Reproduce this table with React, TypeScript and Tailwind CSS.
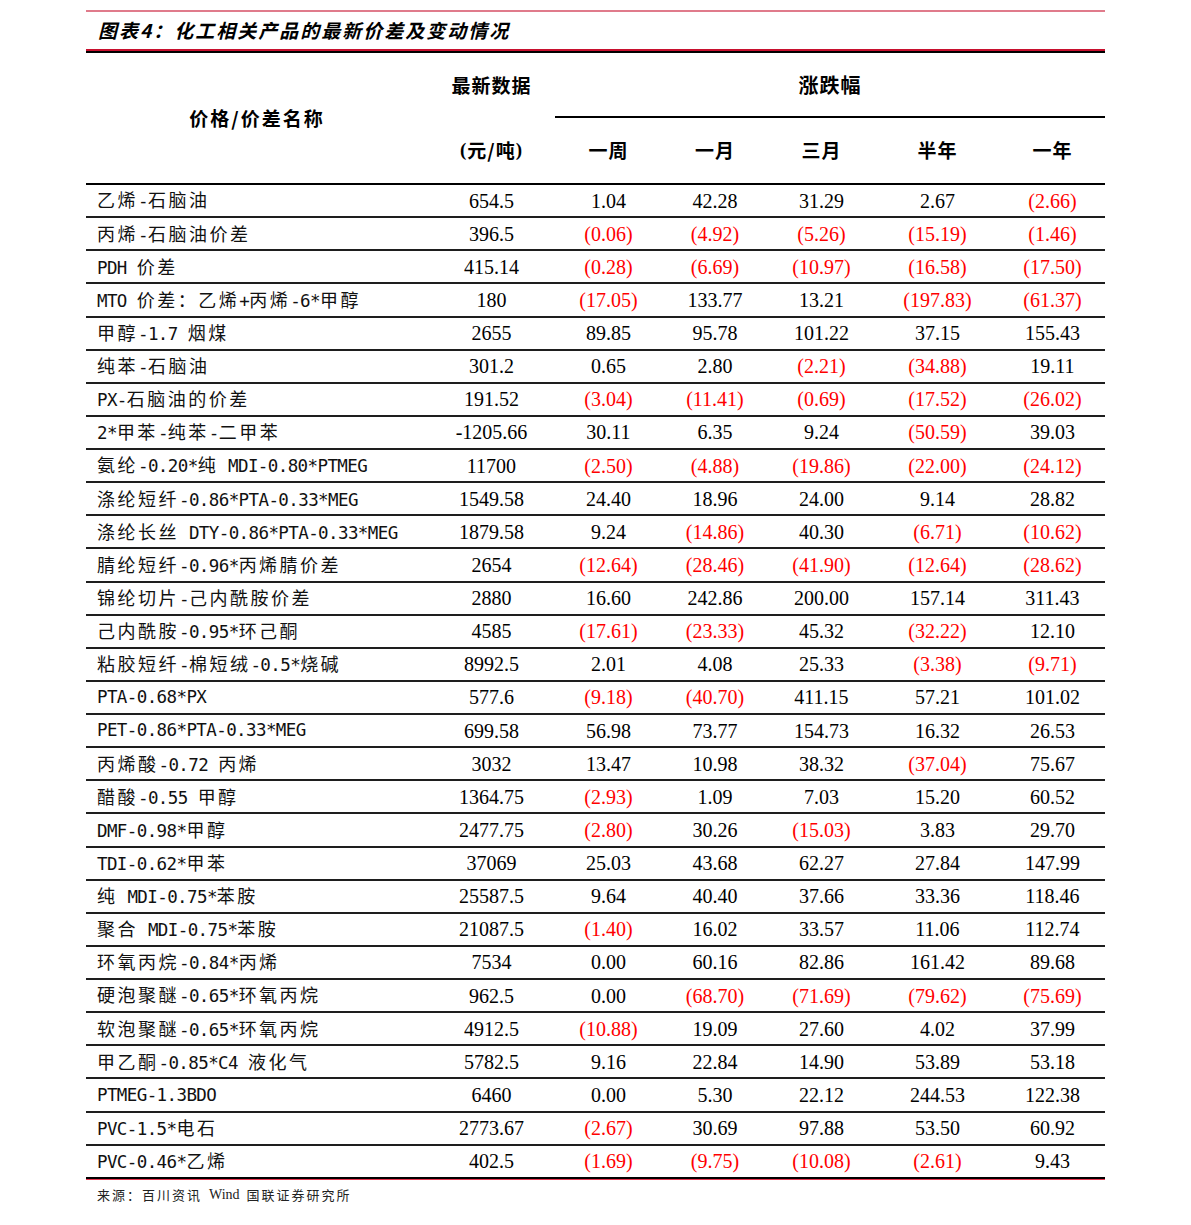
import React from "react";

type Row = [string, string, string, string, string, string, string];

const rows: Row[] = [
  ["乙烯-石脑油", "654.5", "1.04", "42.28", "31.29", "2.67", "(2.66)"],
  ["丙烯-石脑油价差", "396.5", "(0.06)", "(4.92)", "(5.26)", "(15.19)", "(1.46)"],
  ["PDH 价差", "415.14", "(0.28)", "(6.69)", "(10.97)", "(16.58)", "(17.50)"],
  ["MTO 价差：乙烯+丙烯-6*甲醇", "180", "(17.05)", "133.77", "13.21", "(197.83)", "(61.37)"],
  ["甲醇-1.7 烟煤", "2655", "89.85", "95.78", "101.22", "37.15", "155.43"],
  ["纯苯-石脑油", "301.2", "0.65", "2.80", "(2.21)", "(34.88)", "19.11"],
  ["PX-石脑油的价差", "191.52", "(3.04)", "(11.41)", "(0.69)", "(17.52)", "(26.02)"],
  ["2*甲苯-纯苯-二甲苯", "-1205.66", "30.11", "6.35", "9.24", "(50.59)", "39.03"],
  ["氨纶-0.20*纯 MDI-0.80*PTMEG", "11700", "(2.50)", "(4.88)", "(19.86)", "(22.00)", "(24.12)"],
  ["涤纶短纤-0.86*PTA-0.33*MEG", "1549.58", "24.40", "18.96", "24.00", "9.14", "28.82"],
  ["涤纶长丝 DTY-0.86*PTA-0.33*MEG", "1879.58", "9.24", "(14.86)", "40.30", "(6.71)", "(10.62)"],
  ["腈纶短纤-0.96*丙烯腈价差", "2654", "(12.64)", "(28.46)", "(41.90)", "(12.64)", "(28.62)"],
  ["锦纶切片-己内酰胺价差", "2880", "16.60", "242.86", "200.00", "157.14", "311.43"],
  ["己内酰胺-0.95*环己酮", "4585", "(17.61)", "(23.33)", "45.32", "(32.22)", "12.10"],
  ["粘胶短纤-棉短绒-0.5*烧碱", "8992.5", "2.01", "4.08", "25.33", "(3.38)", "(9.71)"],
  ["PTA-0.68*PX", "577.6", "(9.18)", "(40.70)", "411.15", "57.21", "101.02"],
  ["PET-0.86*PTA-0.33*MEG", "699.58", "56.98", "73.77", "154.73", "16.32", "26.53"],
  ["丙烯酸-0.72 丙烯", "3032", "13.47", "10.98", "38.32", "(37.04)", "75.67"],
  ["醋酸-0.55 甲醇", "1364.75", "(2.93)", "1.09", "7.03", "15.20", "60.52"],
  ["DMF-0.98*甲醇", "2477.75", "(2.80)", "30.26", "(15.03)", "3.83", "29.70"],
  ["TDI-0.62*甲苯", "37069", "25.03", "43.68", "62.27", "27.84", "147.99"],
  ["纯 MDI-0.75*苯胺", "25587.5", "9.64", "40.40", "37.66", "33.36", "118.46"],
  ["聚合 MDI-0.75*苯胺", "21087.5", "(1.40)", "16.02", "33.57", "11.06", "112.74"],
  ["环氧丙烷-0.84*丙烯", "7534", "0.00", "60.16", "82.86", "161.42", "89.68"],
  ["硬泡聚醚-0.65*环氧丙烷", "962.5", "0.00", "(68.70)", "(71.69)", "(79.62)", "(75.69)"],
  ["软泡聚醚-0.65*环氧丙烷", "4912.5", "(10.88)", "19.09", "27.60", "4.02", "37.99"],
  ["甲乙酮-0.85*C4 液化气", "5782.5", "9.16", "22.84", "14.90", "53.89", "53.18"],
  ["PTMEG-1.3BDO", "6460", "0.00", "5.30", "22.12", "244.53", "122.38"],
  ["PVC-1.5*电石", "2773.67", "(2.67)", "30.69", "97.88", "53.50", "60.92"],
  ["PVC-0.46*乙烯", "402.5", "(1.69)", "(9.75)", "(10.08)", "(2.61)", "9.43"],
];

const cols = "grid grid-cols-[342px_127px_107px_106px_107px_125px_105px]";
const hd = "font-['Noto_Sans_CJK_SC',sans-serif] font-bold text-[19px] tracking-[1px] text-black";

// split a name into CJK runs and latin runs, so each gets its own font
const CJK = /([\u3000-\u303f\u4e00-\u9fff\uff00-\uffef]+)/;

const Name = ({ text }: { text: string }) => (
  <span className="whitespace-pre">
    {text.split(CJK).map((part, i) =>
      i % 2 === 1 ? (
        <span key={i} className="font-['Noto_Sans_CJK_SC',sans-serif] text-[18px] tracking-[2.5px]">
          {part}
        </span>
      ) : (
        <span key={i} className="font-['DejaVu_Sans_Mono',monospace] text-[17.5px] tracking-[-0.6px]">
          {part}
        </span>
      )
    )}
  </span>
);

export default function App() {
  return (
    <div className="w-[1191px] h-[1225px] bg-white pl-[86px] pt-[10px]">
      <div className="w-[1019px]">
        <div className="h-[2px] bg-[#e07b8b]" />
        <div className="h-[37px] flex items-center pl-[12px] font-['Noto_Sans_CJK_SC',sans-serif] italic font-bold text-[19px] tracking-[2px] text-black">
          图表4：化工相关产品的最新价差及变动情况
        </div>
        <div className="h-[2px] bg-[#c8102e]" />
        <div className="h-[2px] bg-black" />

        {/* header */}
        <div className={`${cols} border-b-2 border-black`}>
          <div className={`row-span-2 flex items-center justify-center ${hd} text-[18px] tracking-[2px]`}>
            价格/价差名称
          </div>
          <div className={`h-[65px] flex items-center justify-center ${hd}`}>最新数据</div>
          <div className={`col-span-5 h-[65px] flex items-center justify-center border-b-2 border-black ${hd} text-[20px]`}>
            涨跌幅
          </div>
          <div className={`h-[65px] flex items-center justify-center ${hd} text-[18px] tracking-[0px]`}>
            <span className="font-['Liberation_Serif','Noto_Sans_CJK_SC',serif]">(</span>
            元/吨
            <span className="font-['Liberation_Serif','Noto_Sans_CJK_SC',serif]">)</span>
          </div>
          {["一周", "一月", "三月", "半年", "一年"].map((h) => (
            <div key={h} className={`h-[65px] flex items-center justify-center ${hd}`}>
              {h}
            </div>
          ))}
        </div>

        {/* body */}
        {rows.map((r, i) => (
          <div
            key={i}
            className={`${cols} h-[33.14px] border-b-2 ${i === rows.length - 1 ? "border-black" : "border-[#1e1e1e]"}`}
          >
            <div className="flex items-center pl-[11px] text-[#111]">
              <Name text={r[0]} />
            </div>
            {r.slice(1).map((v, j) => (
              <div
                key={j}
                className={`flex items-center justify-center font-['Liberation_Serif',serif] text-[20px] ${
                  v.startsWith("(") ? "text-[#ff0000]" : "text-black"
                }`}
              >
                {v}
              </div>
            ))}
          </div>
        ))}
        <div className="h-[1px] bg-[#e8364f]" />

        <div className="h-[30px] flex items-center pl-[11px] text-[13px] tracking-[2px] text-[#222] font-['Noto_Sans_CJK_SC',sans-serif]">
          来源：百川资讯
          <span className="font-['Liberation_Serif',serif] tracking-[0px] px-[7px] text-[14px]">Wind</span>
          国联证券研究所
        </div>
      </div>
    </div>
  );
}
